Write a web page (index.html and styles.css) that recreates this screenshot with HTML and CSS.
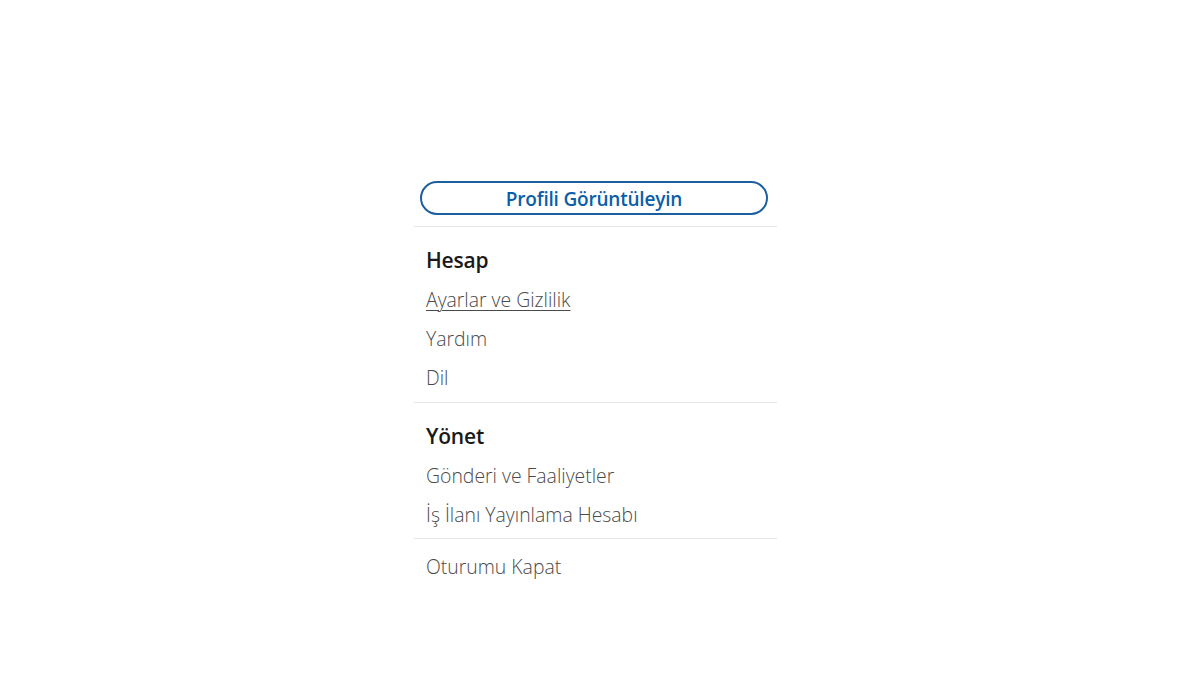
FILE: index.html
```html
<!DOCTYPE html>
<html lang="tr">
<head>
<meta charset="utf-8">
<title>Menü</title>
<link rel="stylesheet" href="styles.css">
</head>
<body>
<div class="menu">
  <div class="profile-wrap">
    <a class="profile-btn" href="#">Profili Görüntüleyin</a>
  </div>
  <div class="section">
    <h3 class="heading">Hesap</h3>
    <a class="item underline" href="#">Ayarlar ve Gizlilik</a>
    <a class="item" href="#">Yardım</a>
    <a class="item" href="#">Dil</a>
  </div>
  <div class="section">
    <h3 class="heading">Yönet</h3>
    <a class="item" href="#">Gönderi ve Faaliyetler</a>
    <a class="item" href="#">İş İlanı Yayınlama Hesabı</a>
  </div>
  <div class="section last">
    <a class="item" href="#">Oturumu Kapat</a>
  </div>
</div>
</body>
</html>
```
FILE: styles.css
```css
html, body {
  margin: 0;
  padding: 0;
  background: #ffffff;
}
body {
  font-family: "Open Sans", "Noto Sans", "Liberation Sans", sans-serif;
  padding-top: 181px;
}
.menu {
  width: 363px;
  margin-left: 414px;
}
.profile-wrap {
  padding: 0 9px 11px 6px;
  border-bottom: 1px solid #e6e6e6;
}
.profile-btn {
  display: flex;
  align-items: center;
  justify-content: center;
  box-sizing: border-box;
  height: 34px;
  padding-top: 1px;
  border: 2px solid #1c5f9f;
  border-radius: 17px;
  color: #0a5ea8;
  font-size: 19px;
  font-weight: 600;
  text-decoration: none;
  letter-spacing: -0.2px;
}
.section {
  padding: 14px 12px 5px 12px;
  border-bottom: 1px solid #e6e6e6;
}
.section + .section {
  padding-bottom: 4px;
}
.section.last {
  border-bottom: none;
  padding-top: 8px;
}
.heading {
  margin: 0;
  font-size: 21px;
  font-weight: 600;
  line-height: 39px;
  color: #1a1a1a;
  letter-spacing: -0.2px;
}
.item {
  display: block;
  font-size: 19.4px;
  font-weight: 300;
  line-height: 39px;
  color: #4a4a4a;
  text-decoration: none;
  letter-spacing: 0;
}
.item.underline {
  text-decoration: underline;
  text-decoration-thickness: 1px;
  text-underline-offset: 3px;
}
```
